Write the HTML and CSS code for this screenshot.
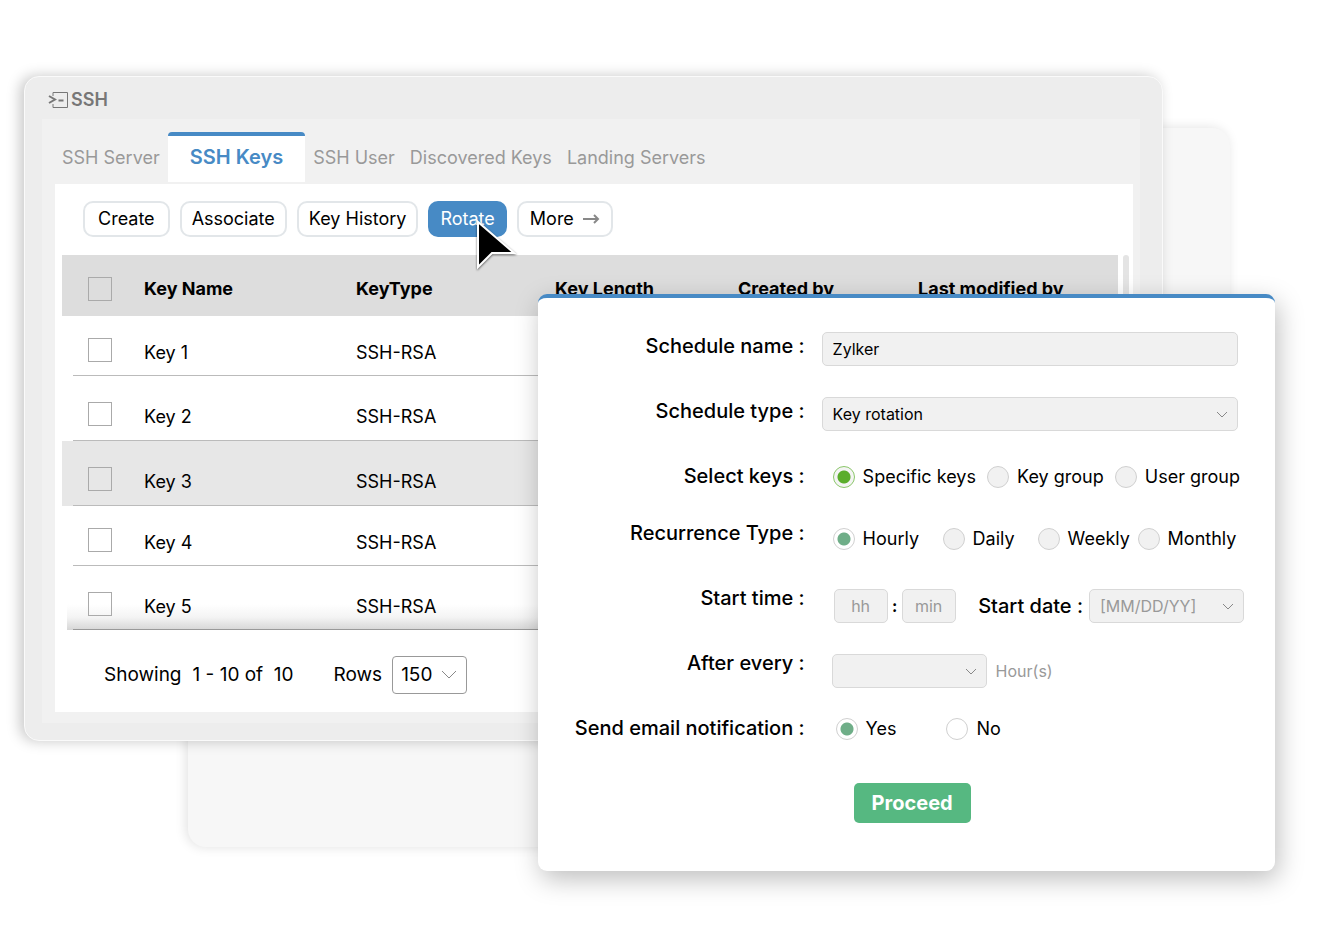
FILE: index.html
```html
<!DOCTYPE html>
<html lang="en">
<head>
    <meta charset="utf-8">
    <title>SSH Keys</title>
    <link rel="stylesheet" href="styles.css">
</head>
<body>
    <div class="stage">
        <div class="backdrop"></div>

        <main class="window">
            <header class="window-title">
                <svg width="20" height="18" viewBox="0 0 20 18" fill="none" stroke="#777">
                    <path d="M5 5V1.500H19.500V16.500H5V13" />
                    <path d="M1 5L7 8.500L1 12" stroke-width="2" />
                    <path d="M10.500 9.500H15.500" stroke-width="2" />
                </svg>
                <h1>SSH</h1>
            </header>

            <div class="window-body">
                <nav class="tabs">
                    <a href="#server">SSH Server</a>
                    <a href="#keys" class="active">SSH Keys</a>
                    <a href="#user">SSH User</a>
                    <a href="#discovered">Discovered Keys</a>
                    <a href="#landing">Landing Servers</a>
                </nav>

                <section class="panel">
                    <div class="toolbar">
                        <button type="button" class="btn btn-wide">Create</button>
                        <button type="button" class="btn">Associate</button>
                        <button type="button" class="btn">Key History</button>
                        <button type="button" class="btn btn-active" id="rotateButton">Rotate
                            <svg class="cursor" width="44" height="56" viewBox="0 0 44 56">
                                <path d="M3 4V49L17 35H39Z" fill="#000" stroke="#fff" stroke-width="2" />
                            </svg>
                        </button>
                        <button type="button" class="btn btn-more">More
                            <svg width="17" height="10" viewBox="0 0 17 10" fill="none" stroke="#888" stroke-width="2">
                                <path d="M0 5H15M11 1L15 5L11 9" />
                            </svg>
                        </button>
                    </div>

                    <div class="table-wrap">
                        <table>
                            <colgroup>
                                <col class="col-check">
                                <col class="col-name">
                                <col class="col-type">
                                <col class="col-length">
                                <col class="col-created">
                                <col>
                            </colgroup>
                            <thead>
                                <tr>
                                    <th><input type="checkbox" aria-label="Select all keys"></th>
                                    <th>Key Name</th>
                                    <th>KeyType</th>
                                    <th>Key Length</th>
                                    <th>Created by</th>
                                    <th>Last modified by</th>
                                </tr>
                            </thead>
                            <tbody>
                                <tr class="short">
                                    <td><input type="checkbox" aria-label="Select Key 1"></td>
                                    <td>Key 1</td>
                                    <td>SSH-RSA</td>
                                    <td></td><td></td><td></td>
                                </tr>
                                <tr>
                                    <td><input type="checkbox" aria-label="Select Key 2"></td>
                                    <td>Key 2</td>
                                    <td>SSH-RSA</td>
                                    <td></td><td></td><td></td>
                                </tr>
                                <tr class="selected">
                                    <td><input type="checkbox" aria-label="Select Key 3"></td>
                                    <td>Key 3</td>
                                    <td>SSH-RSA</td>
                                    <td></td><td></td><td></td>
                                </tr>
                                <tr class="short">
                                    <td><input type="checkbox" aria-label="Select Key 4"></td>
                                    <td>Key 4</td>
                                    <td>SSH-RSA</td>
                                    <td></td><td></td><td></td>
                                </tr>
                                <tr class="last">
                                    <td><input type="checkbox" aria-label="Select Key 5"></td>
                                    <td>Key 5</td>
                                    <td>SSH-RSA</td>
                                    <td></td><td></td><td></td>
                                </tr>
                            </tbody>
                        </table>
                        <div class="scrollbar"></div>
                    </div>

                    <footer class="pager">
                        <span>Showing</span>
                        <span class="range">1 - 10 of&nbsp; 10</span>
                        <label for="rows">Rows</label>
                        <span class="select rows-select">
                            <select id="rows"><option>150</option></select>
                            <svg width="16" height="10" viewBox="0 0 16 10"><path d="M1 1L8 8L15 1" /></svg>
                        </span>
                    </footer>
                </section>
            </div>
        </main>

        <form class="dialog">
            <div class="row">
                <label class="row-label" for="name">Schedule name :</label>
                <div class="field">
                    <input type="text" id="name" value="Zylker">
                </div>
            </div>
            <div class="row">
                <label class="row-label" for="type">Schedule type :</label>
                <div class="field">
                    <span class="select">
                        <select id="type"><option>Key rotation</option></select>
                        <svg width="12" height="8" viewBox="0 0 12 8"><path d="M1 1L6 6L11 1" /></svg>
                    </span>
                </div>
            </div>
            <div class="row row-tight" role="radiogroup" aria-labelledby="keysLabel">
                <span class="row-label" id="keysLabel">Select keys :</span>
                <div class="field options">
                    <label class="bright"><input type="radio" name="keys" checked>Specific keys</label>
                    <label><input type="radio" name="keys">Key group</label>
                    <label><input type="radio" name="keys">User group</label>
                </div>
            </div>
            <div class="row" role="radiogroup" aria-labelledby="recurrenceLabel">
                <span class="row-label" id="recurrenceLabel">Recurrence Type :</span>
                <div class="field options recurrence lower">
                    <label><input type="radio" name="recurrence" checked>Hourly</label>
                    <label><input type="radio" name="recurrence">Daily</label>
                    <label><input type="radio" name="recurrence">Weekly</label>
                    <label><input type="radio" name="recurrence">Monthly</label>
                </div>
            </div>
            <div class="row">
                <label class="row-label" for="hour">Start time :</label>
                <div class="field time lower">
                    <input type="text" id="hour" placeholder="hh">
                    <b>:</b>
                    <input type="text" placeholder="min" aria-label="Minutes">
                    <label class="date-label" for="date">Start date :</label>
                    <span class="select small-select">
                        <select id="date"><option>[MM/DD/YY]</option></select>
                        <svg width="12" height="8" viewBox="0 0 12 8"><path d="M1 1L6 6L11 1" /></svg>
                    </span>
                </div>
            </div>
            <div class="row">
                <label class="row-label" for="every">After every :</label>
                <div class="field every lower">
                    <span class="select small-select">
                        <select id="every"><option></option></select>
                        <svg width="12" height="8" viewBox="0 0 12 8"><path d="M1 1L6 6L11 1" /></svg>
                    </span>
                    <span class="unit">Hour(s)</span>
                </div>
            </div>
            <div class="row" role="radiogroup" aria-labelledby="mailLabel">
                <span class="row-label" id="mailLabel">Send email notification :</span>
                <div class="field options mail">
                    <label><input type="radio" name="mail" checked>Yes</label>
                    <label><input type="radio" name="mail">No</label>
                </div>
            </div>
            <button type="button" class="proceed">Proceed</button>
        </form>
    </div>
</body>
</html>
```
FILE: styles.css
```css
* {
    box-sizing: border-box;
}

body {
    margin: 0;
    background-color: #fff;
    color: #000;
    font-family: Inter, "Liberation Sans", sans-serif;
    font-size: 18px;
    line-height: 24px;
}

button, input, select {
    font: inherit;
    color: inherit;
    margin: 0;
}

.stage {
    position: relative;
    min-height: 100vh;
    padding: 76px 181px 0 24px;
}

.backdrop {
    position: absolute;
    top: 128px;
    left: 188px;
    right: 114px;
    height: 719px;
    background-color: #f7f7f7;
    border-radius: 18px;
    box-shadow: -2px 0 12px rgba(0, 0, 0, 0.12);
}

/* Main window */
.window {
    position: relative;
    padding: 0 22px 17px 17px;
    background-color: #ededed;
    border: 1px solid #fafafa;
    border-radius: 15px;
    box-shadow: -4px 0 14px rgba(0, 0, 0, 0.22);
}

.window-title {
    display: flex;
    align-items: center;
    gap: 3px;
    height: 42px;
    padding: 4px 0 0 6px;
    color: #777;
}

h1 {
    margin: 0;
    font-size: 18px;
    font-weight: 600;
}

.window-body {
    background-color: #f1f1f1;
    padding: 13px 7px 11px 13px;
}

.tabs {
    display: flex;
    align-items: center;
    height: 50px;
    margin-bottom: 2px;
    padding-left: 7px;
    gap: 8px;
}

.tabs a {
    padding-top: 2px;
    color: #999;
    text-decoration: none;
    white-space: nowrap;
}

.tabs .active {
    height: 50px;
    padding: 9px 22px 0;
    background-color: #fff;
    border-top: 4px solid #478ac5;
    border-radius: 4px 4px 0 0;
    color: #478ac5;
    font-size: 20px;
    font-weight: 600;
}

.tabs .active ~ a + a {
    margin-left: 7px;
}

.panel {
    background-color: #fff;
    padding: 17px 4px 18px 7px;
}

.toolbar {
    display: flex;
    gap: 10px;
    padding-left: 21px;
    margin-bottom: 18px;
}

.btn {
    height: 36px;
    padding: 0 10px;
    background-color: #fff;
    border: 2px solid #e2e6e9;
    border-radius: 10px;
    white-space: nowrap;
}

.btn-wide {
    padding: 0 13px;
}

.btn-active {
    position: relative;
    background-color: #478ac5;
    border-color: #478ac5;
    color: #fff;
}

.btn-more {
    display: flex;
    align-items: center;
    gap: 9px;
    padding: 0 11px;
}

.cursor {
    position: absolute;
    left: 45px;
    top: 15px;
    z-index: 2;
    filter: drop-shadow(0 1px 1px rgba(0, 0, 0, 0.6));
}

.table-wrap {
    display: flex;
    gap: 5px;
}

.scrollbar {
    width: 6px;
    background-color: #e4e4e4;
    border-radius: 3px;
}

table {
    flex: 1;
    table-layout: fixed;
    border-collapse: collapse;
}

.col-check { width: 82px; }
.col-name { width: 212px; }
.col-type { width: 199px; }
.col-length { width: 183px; }
.col-created { width: 180px; }

th, td {
    padding: 0;
    text-align: left;
}

th {
    height: 61px;
    padding-top: 7px;
    background-color: #ddd;
    font-weight: 700;
    vertical-align: middle;
}

td {
    height: 65px;
    padding-bottom: 12px;
    vertical-align: bottom;
}

.short td {
    height: 60px;
    padding-bottom: 11px;
}

.last td {
    height: 64px;
    padding-bottom: 11px;
}

th:first-child, td:first-child {
    padding-left: 26px;
}

/* divider starts a little inside the row */
tbody tr {
    background: linear-gradient(#bbb, #bbb) 11px 100% / 100% 1px no-repeat;
}

tbody .selected {
    background-color: #e7e7e7;
}

tbody .last {
    background:
        linear-gradient(#999, #999) 11px 100% / 100% 1px no-repeat,
        linear-gradient(transparent 60%, #f4f4f4 80%, #d6d6d6) 5px 0 / 100% 100% no-repeat;
}

input[type="checkbox"] {
    appearance: none;
    display: block;
    width: 24px;
    height: 24px;
    border: 1px solid #aaa;
}

td input[type="checkbox"] {
    margin-bottom: 3px;
}

.pager {
    display: flex;
    align-items: center;
    padding: 26px 0 0 42px;
    font-size: 19px;
}

.range {
    margin: 0 40px 0 11px;
}

.select {
    position: relative;
    display: block;
}

select {
    appearance: none;
    width: 100%;
    background-color: transparent;
    cursor: pointer;
}

.select svg {
    position: absolute;
    right: 10px;
    top: 14px;
    fill: none;
    stroke: #888;
    pointer-events: none;
}

.rows-select {
    width: 75px;
    margin-left: 10px;
}

.rows-select select {
    height: 38px;
    padding: 0 8px;
    border: 1px solid #999;
    border-radius: 4px;
}

/* Schedule dialog */
.dialog {
    position: absolute;
    top: 294px;
    left: 40%;
    right: 69px;
    padding: 34px 31px 48px 0;
    background-color: #fff;
    border-top: 4px solid #478ac5;
    border-radius: 9px;
    box-shadow: 3px 8px 26px rgba(0, 0, 0, 0.26);
}

.row {
    display: flex;
    align-items: flex-start;
    height: 65px;
}

.row-tight {
    height: 57px;
}

.row-label {
    width: 267px;
    flex-shrink: 0;
    text-align: right;
    white-space: nowrap;
    font-size: 20px;
    font-weight: 500;
    line-height: 28px;
}

.field {
    flex: 1;
    padding: 0 6px 0 17px;
    font-size: 16px;
}

.dialog input[type="text"], .dialog select {
    display: block;
    width: 100%;
    height: 34px;
    padding: 0 10px;
    background-color: #f1f1f1;
    border: 1px solid #d9d9d9;
    border-radius: 5px;
}

.options {
    display: flex;
    justify-content: space-between;
    padding: 0 4px 0 28px;
    font-size: 18px;
    line-height: 30px;
}

.options label {
    display: flex;
    align-items: center;
    gap: 8px;
    white-space: nowrap;
}

.recurrence {
    display: grid;
    grid-template-columns: 110px 95px 100px auto;
    justify-content: start;
}

.field.lower {
    padding-top: 5px;
}

.mail {
    justify-content: flex-start;
    gap: 50px;
    padding-left: 31px;
}

input[type="radio"] {
    appearance: none;
    width: 22px;
    height: 22px;
    background-color: #f1f1f1;
    border: 1px solid #d0d0d0;
    border-radius: 50%;
}

.mail input[type="radio"] {
    background-color: #fff;
}

input[type="radio"]:checked {
    background: #fff radial-gradient(#6fae88 6px, transparent 7px);
}

.bright input[type="radio"]:checked {
    background: #f4f4f4 radial-gradient(#5aad2b 6px, transparent 7px);
    border-color: #8bc76a;
}

.time {
    display: flex;
    align-items: center;
    padding: 0 0 0 29px;
}

.dialog .time input[type="text"] {
    width: 54px;
    text-align: center;
}

.time b {
    width: 14px;
    text-align: center;
}

input::placeholder {
    color: #999;
    opacity: 1;
}

.date-label {
    margin: 0 6px 0 auto;
    font-size: 20px;
    font-weight: 500;
    white-space: nowrap;
}

.small-select {
    width: 155px;
    flex-shrink: 0;
    color: #999;
}

.every {
    display: flex;
    align-items: center;
    gap: 9px;
    padding-left: 27px;
}

.unit {
    color: #999;
}

.proceed {
    display: block;
    height: 40px;
    margin: 4px 0 0 316px;
    padding: 0 18px;
    background-color: #56b881;
    border: none;
    border-radius: 5px;
    color: #fff;
    font-size: 20px;
    font-weight: 700;
}
```
